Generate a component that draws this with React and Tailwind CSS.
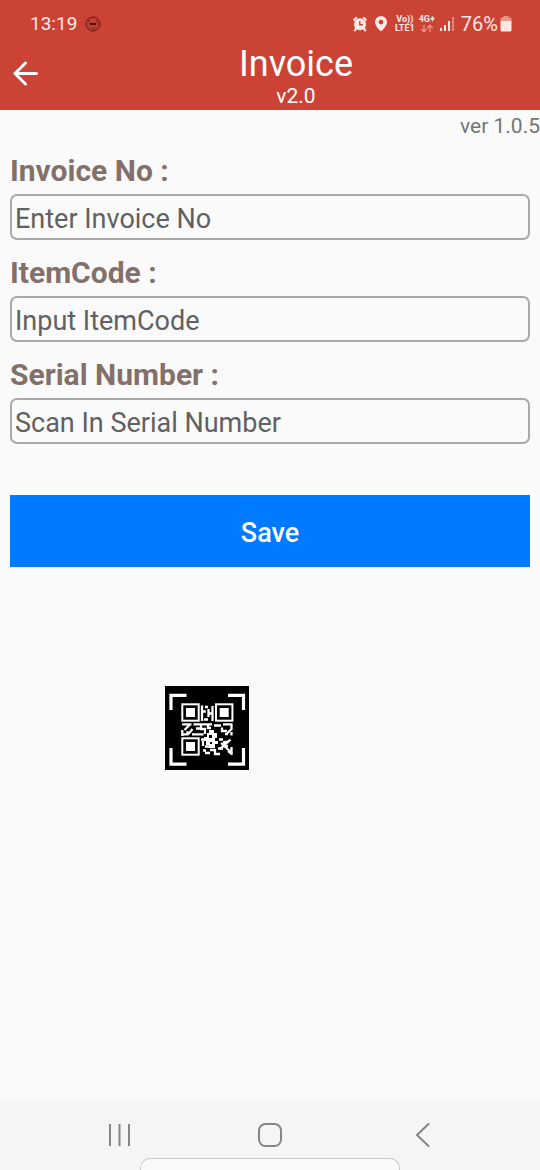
const fields = [
  { id: 'invoiceNo', label: 'Invoice No :', placeholder: 'Enter Invoice No' },
  { id: 'itemCode', label: 'ItemCode :', placeholder: 'Input ItemCode' },
  {
    id: 'serialNumber',
    label: 'Serial Number :',
    placeholder: 'Scan In Serial Number',
  },
];

function StatusBar() {
  return (
    <div className="flex h-12 items-center justify-between pl-[30px] pr-7 text-[#ffe9e5]">
      <div className="flex items-center gap-2">
        <span className="text-[19px] leading-6">13:19</span>
        <svg className="h-4 w-4" viewBox="0 0 16 16" fill="none">
          <circle cx="8" cy="8" r="7" stroke="#5a1c15" strokeWidth="1" />
          <circle
            cx="8"
            cy="8"
            r="5.2"
            stroke="#8c2b21"
            strokeWidth="1"
            strokeDasharray="2 1"
          />
          <path
            d="M5 7.2h2.6v1.6H5zM8.4 7.2H11v1.6H8.4zM3 4.5l2 1M13 4.5l-2 1M5 12h6"
            fill="#35100c"
            stroke="#35100c"
            strokeWidth="0.5"
          />
        </svg>
      </div>

      <div className="flex items-center">
        {/* Alarm */}
        <svg className="h-4 w-4" viewBox="0 0 16 16" fill="none">
          <circle cx="8" cy="8.2" r="6" fill="currentColor" />
          <path
            d="M2.200 3.800 4.200 2M13.800 3.800l-2-1.800M3.800 13l-1 1.300M12.200 13l1 1.300"
            stroke="currentColor"
            strokeWidth="2.2"
            strokeLinecap="round"
          />
          <path d="M7.800 5v3.800h3" stroke="#cb4335" strokeWidth="1.4" />
        </svg>
        {/* Location */}
        <svg className="ml-[7px] h-4 w-3" viewBox="0 0 12 16">
          <path
            fill="currentColor"
            fillRule="evenodd"
            d="M6 0a6 6 0 0 0-6 6c0 4 4.500 8 6 9.500 1.500-1.500 6-5.500 6-9.500a6 6 0 0 0-6-6zm0 3.700a2.400 2.400 0 1 1 0 4.800 2.400 2.400 0 0 1 0-4.800z"
          />
        </svg>
        <div className="ml-2 flex flex-col items-center text-[9px] font-bold leading-[9px]">
          <span>Vo))</span>
          <span>LTE1</span>
        </div>
        <div className="ml-1 flex flex-col items-center text-[9px] font-bold leading-[9px]">
          <span>4G+</span>
          <svg
            className="h-[9px] w-[14px] opacity-50"
            viewBox="0 0 14 9"
            fill="none"
            stroke="currentColor"
            strokeWidth="1.3"
          >
            <path d="M4 1v6.500M1.200 5 4 7.800 6.800 5M10 8V1.500M7.200 4 10 1.200 12.800 4" />
          </svg>
        </div>
        {/* Signal strength */}
        <svg className="ml-[5px] h-4 w-[14px]" viewBox="0 0 14 16">
          <g fill="currentColor">
            <rect x="0" y="12" width="2" height="3" />
            <rect x="4" y="9" width="2" height="6" />
            <rect x="8" y="5" width="2" height="10" />
            <rect x="12" y="1" width="2" height="14" opacity="0.4" />
          </g>
        </svg>
        <span className="ml-[7px] text-[20px] leading-6">76%</span>
        {/* Battery */}
        <svg className="ml-[2px] h-4 w-3" viewBox="0 0 12 16">
          <g fill="currentColor">
            <path
              d="M3.500 0h5v1.500H10a1.500 1.500 0 0 1 1.500 1.500v2H.5V3A1.500 1.500 0 0 1 2 1.500h1.500z"
              opacity="0.5"
            />
            <path d="M.5 5h11v9a1.500 1.500 0 0 1-1.500 1.500H2A1.500 1.500 0 0 1 .5 14z" />
          </g>
        </svg>
      </div>
    </div>
  );
}

function Header() {
  return (
    <header className="bg-[#cb4335] text-white">
      <StatusBar />
      <div className="flex h-[62px]">
        <button
          type="button"
          aria-label="Back"
          className="flex w-[52px] items-center pb-3 pl-3"
        >
          <svg
            className="h-7 w-7"
            viewBox="0 0 28 28"
            fill="none"
            stroke="currentColor"
            strokeWidth="3"
            strokeLinecap="round"
            strokeLinejoin="round"
          >
            <path d="M24.500 14.500H3M13.500 4 3 14.500 13.500 25" />
          </svg>
        </button>
        <div className="flex flex-1 flex-col items-center">
          <h1 className="text-[36px] leading-8">Invoice</h1>
          <span className="pt-1 text-[21px] leading-6">v2.0</span>
        </div>
      </div>
    </header>
  );
}

function QrIcon() {
  return (
    <svg className="h-[84px] w-[84px]" viewBox="0 0 84 84">
      <rect width="84" height="84" fill="#000" />
      {/* Scan frame corners */}
      <path
        d="M6 24V9.300h15.500M63 9.300h15.500V24M78.500 62v16.200H63M21.500 78.200H6V62"
        fill="none"
        stroke="#fff"
        strokeWidth="3.2"
      />
      {/* Finder squares */}
      <g fill="none" stroke="#fff" strokeWidth="2">
        <rect x="17.300" y="18.300" width="16.400" height="16.400" />
        <rect x="51" y="18.300" width="16.400" height="16.400" />
        <rect x="17.300" y="52.300" width="16.400" height="16.400" />
      </g>
      <g fill="#fff">
        <rect x="21" y="22" width="9" height="9" />
        <rect x="54.700" y="22" width="9" height="9" />
        <rect x="21" y="56" width="9" height="9" />
      </g>
      {/* Data modules */}
      <g fill="none" stroke="#fff" strokeWidth="2.3">
        <path d="M37 19.500V35M37 25.500h3.800M39 33.500h4M40 21h3M43.500 23v8M47.500 20v15M43 27.500h5" />
        <path d="M17 38.300h9.500M24.500 39l-5 5M17.300 44v6M18 48.300h4.500v-3M27.500 43l-4 5M28.500 38.300H47M31 42.500h4M27 48.300h11.500M36 39v4h4v5M43 38v4h3" />
        <path d="M49 39.500h7M58 38.300h9.500M66.500 38v5l-4 4M57 41.500v3.500h5M66.500 46v3.500M60 48h3" />
        <path d="M36 53.500h5M38 55v5M40 60.500h4M40 67h5M45 64h5v4h5M53 62.500h5M38 64.500h3" />
        <path d="M54 53.500h4M60 56h3.500M57 60h6M66.500 61v8M59 55v3M63 65l4 3" />
        <path d="M65.500 53.500 55 63M56 57l11 10" />
      </g>
      <path
        fill="#fff"
        fillRule="evenodd"
        d="M44 44h5v3h3v5h-2v3h3v3h-3v4h-6v-3h-3v-4h-2v-4h3v-4h2zM44 49v3h3v-3zM45 56v2h2v-2z"
      />
    </svg>
  );
}

function NavigationBar() {
  return (
    <footer className="flex h-[71px] flex-col justify-between bg-[#f5f5f5]">
      <div className="flex items-center px-[107px] pt-6 text-[#858585]">
        <button type="button" aria-label="Recent apps">
          <svg
            className="h-6 w-6"
            viewBox="0 0 24 24"
            stroke="currentColor"
            strokeWidth="2"
          >
            <path d="M3 1v22M12.500 1v22M22 1v22" />
          </svg>
        </button>
        <div className="flex flex-1 justify-center">
          <button type="button" aria-label="Home">
            <svg
              className="h-6 w-6"
              viewBox="0 0 24 24"
              fill="none"
              stroke="currentColor"
              strokeWidth="2"
            >
              <rect x="1" y="1" width="22" height="22" rx="6.500" />
            </svg>
          </button>
        </div>
        <button type="button" aria-label="Back">
          <svg
            className="h-6 w-6"
            viewBox="0 0 24 24"
            fill="none"
            stroke="currentColor"
            strokeWidth="2"
            strokeLinecap="round"
            strokeLinejoin="round"
          >
            <path d="M19.500 1 8 12l11.500 11" />
          </svg>
        </button>
      </div>
      <div className="mx-[140px] h-3 rounded-t-[10px] border border-b-0 border-[#c9c9c9] bg-[#fafafa]" />
    </footer>
  );
}

export default function App() {
  return (
    <div className="flex min-h-screen flex-col bg-[#fafafa] font-['Roboto',sans-serif]">
      <Header />

      <main className="flex flex-1 flex-col">
        <p className="text-right text-[21px] leading-8 text-[#757575]">
          ver 1.0.5
        </p>

        <form className="flex flex-col px-[10px] pt-3">
          <div className="flex flex-col gap-4">
            {fields.map((field) => (
              <div key={field.id} className="flex flex-col gap-[6px]">
                <label
                  htmlFor={field.id}
                  className="text-[30px] font-bold leading-[34px] text-[#84706a]"
                >
                  {field.label}
                </label>
                <input
                  id={field.id}
                  type="text"
                  placeholder={field.placeholder}
                  className="h-[46px] w-full rounded-[7px] border-2 border-[#a9a9a9] px-[3px] pt-1 text-[27px] text-[#616161] placeholder:text-[#616161]"
                />
              </div>
            ))}
          </div>

          <button
            type="button"
            className="mt-[51px] h-[72px] bg-[#007bff] pt-1 text-[27px] font-medium text-white"
          >
            Save
          </button>
        </form>

        <div className="flex justify-center pr-[126px] pt-[119px]">
          <button type="button" aria-label="Scan code">
            <QrIcon />
          </button>
        </div>
      </main>

      <NavigationBar />
    </div>
  );
}
